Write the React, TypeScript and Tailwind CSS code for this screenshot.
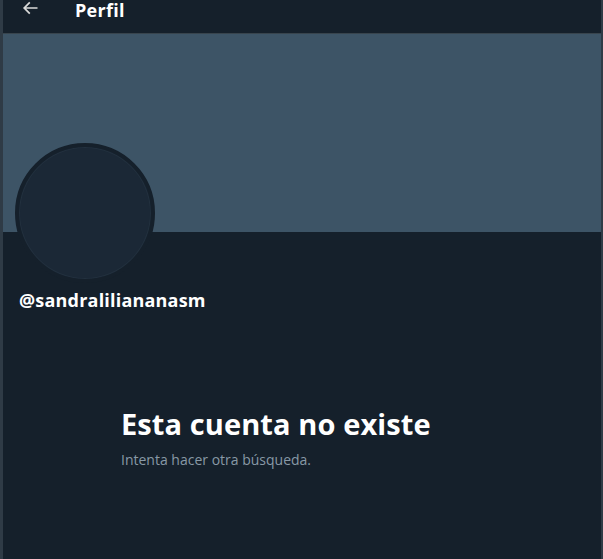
export default function App() {
  return (
    <main
      className="w-[603px] h-[559px] overflow-hidden bg-[#15202b] border-l-[3px] border-r-[2px] border-[#2f3b46] text-white"
      style={{ fontFamily: '"Open Sans", "Noto Sans", sans-serif' }}
    >
      {/* Header */}
      <header className="h-[34px] flex items-start pl-[17px] border-b border-[#38444d] bg-[#15202b]">
        <div className="flex items-start gap-[35px]">
          <svg width="20" height="20" viewBox="0 0 24 24" className="text-[#d9d9d9] -mt-[2px]">
            <path
              d="M7.414 13l5.043 5.04-1.414 1.42L3.586 12l7.457-7.46 1.414 1.42L7.414 11H21v2H7.414z"
              fill="currentColor"
            />
          </svg>
          <h1 className="text-[18px] font-bold leading-[18px] tracking-[0.3px] pt-[1px]">Perfil</h1>
        </div>
      </header>

      {/* Banner */}
      <div className="h-[198px] bg-[#3d5466]" />

      {/* Avatar + name */}
      <div className="px-[12px]">
        <div className="-mt-[89px] w-[140px] h-[140px] rounded-full border-[4px] border-[#15202b] bg-[#1b2836] shadow-[inset_0_0_0_1px_#22303e]" />
        <p className="mt-[5px] ml-[4px] text-[18px] font-bold leading-[24px] tracking-[0.2px]">@sandraliliananasm</p>
      </div>

      {/* Empty state */}
      <section className="pl-[118px] pt-[94px]">
        <h2 className="text-[29px] font-bold leading-[36px] tracking-[0.1px]">Esta cuenta no existe</h2>
        <p className="mt-[8px] text-[14px] text-[#8899a6] leading-[20px]">Intenta hacer otra búsqueda.</p>
      </section>
    </main>
  );
}
